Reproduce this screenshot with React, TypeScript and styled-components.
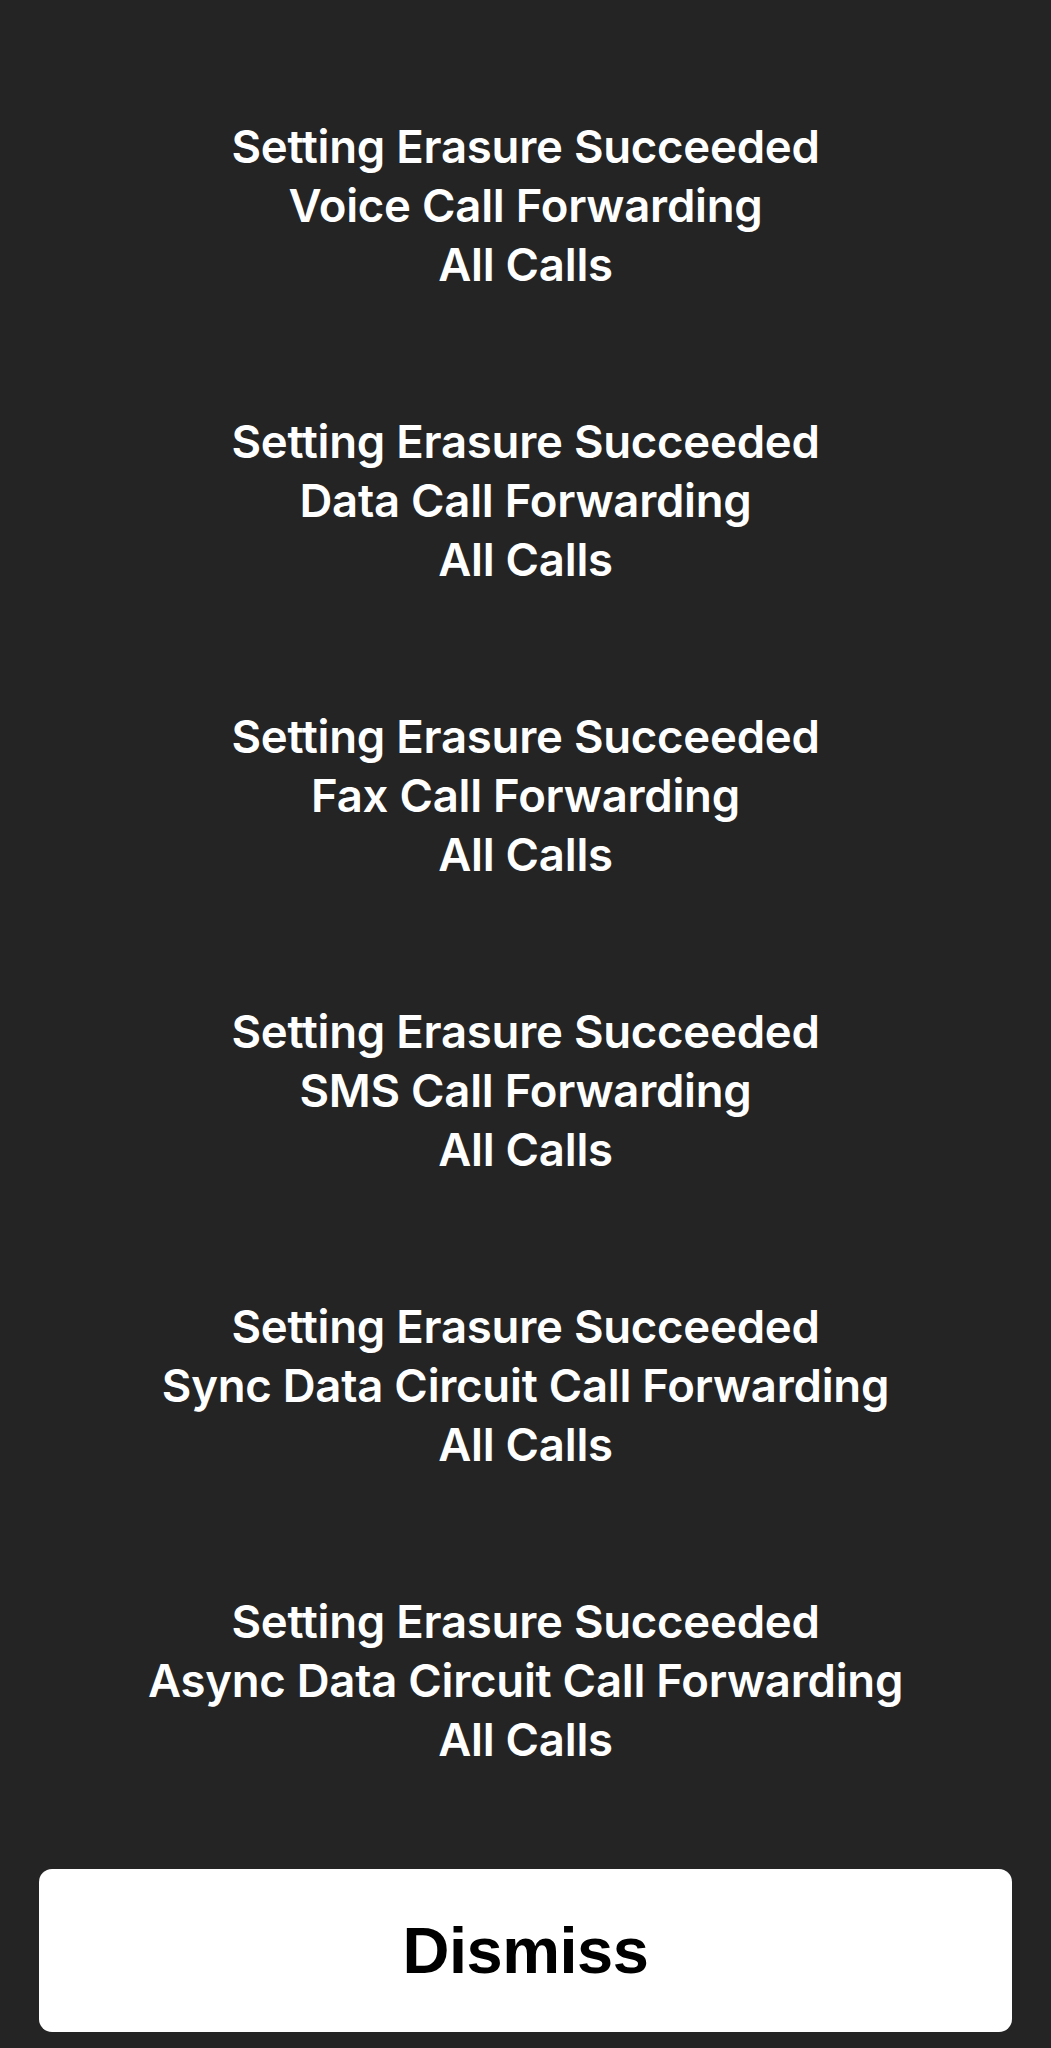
import React from "react";
import styled, { createGlobalStyle } from "styled-components";

const GlobalStyle = createGlobalStyle`
  html, body {
    margin: 0;
    padding: 0;
    background: #242424;
  }
  * {
    box-sizing: border-box;
  }
`;

const Screen = styled.div`
  min-height: 2048px;
  background: #242424;
  display: flex;
  flex-direction: column;
  padding: 117px 39px 16px 39px;
`;

const MessageList = styled.div`
  display: flex;
  flex-direction: column;
  gap: 118px;
`;

const Message = styled.div`
  display: flex;
  flex-direction: column;
  align-items: center;
  text-align: center;
  color: #ffffff;
  font-family: Inter, "Noto Sans", sans-serif;
  font-weight: 600;
  font-size: 45.5px;
  line-height: 59px;
  letter-spacing: -0.25px;
`;

const Line = styled.span`
  white-space: nowrap;
`;

const DismissButton = styled.button`
  margin-top: 100px;
  height: 163px;
  width: 100%;
  border: none;
  border-radius: 13px;
  background: #ffffff;
  color: #000000;
  font-family: "Liberation Sans", Arial, sans-serif;
  font-weight: 700;
  font-size: 65px;
  letter-spacing: -0.5px;
  cursor: pointer;
`;

const services = [
  "Voice Call Forwarding",
  "Data Call Forwarding",
  "Fax Call Forwarding",
  "SMS Call Forwarding",
  "Sync Data Circuit Call Forwarding",
  "Async Data Circuit Call Forwarding",
];

const App: React.FC = () => {
  return (
    <>
      <GlobalStyle />
      <Screen>
        <MessageList>
          {services.map((service) => (
            <Message key={service}>
              <Line>Setting Erasure Succeeded</Line>
              <Line>{service}</Line>
              <Line>All Calls</Line>
            </Message>
          ))}
        </MessageList>
        <DismissButton>Dismiss</DismissButton>
      </Screen>
    </>
  );
};

export default App;
